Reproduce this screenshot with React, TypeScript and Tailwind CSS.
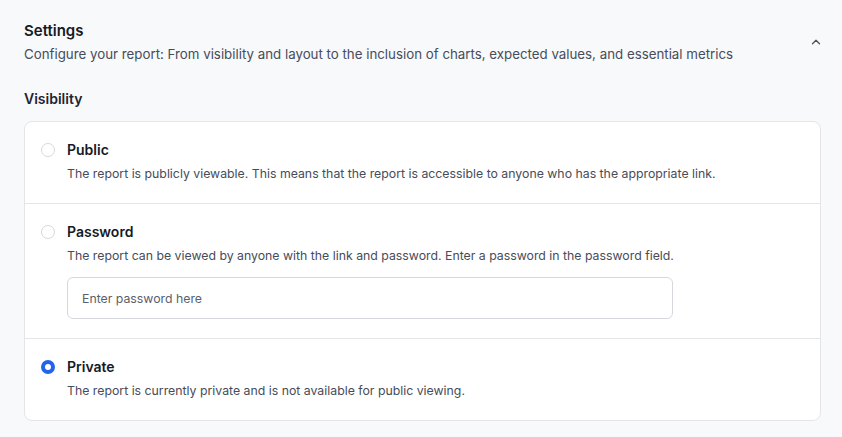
import React, { useState } from "react"

const options = [
  {
    id: "public",
    title: "Public",
    text: "The report is publicly viewable. This means that the report is accessible to anyone who has the appropriate link.",
  },
  {
    id: "password",
    title: "Password",
    text: "The report can be viewed by anyone with the link and password. Enter a password in the password field.",
  },
  {
    id: "private",
    title: "Private",
    text: "The report is currently private and is not available for public viewing.",
  },
]

export default function App() {
  const [visibility, setVisibility] = useState("private")

  return (
    <div className="min-h-[437px] bg-[#f8f9fb] pl-6 pr-[21px] pt-[21px] text-[#1f2433]" style={{ fontFamily: "Inter, 'Noto Sans', sans-serif" }}>
      {/* Header */}
      <div className="flex items-center justify-between">
        <div>
          <h2 className="text-[15px] leading-5 font-semibold text-[#161a25]">Settings</h2>
          <p className="mt-[3px] text-[13.3px] leading-5 text-[#474c5a]">
            Configure your report: From visibility and layout to the inclusion of charts, expected values, and essential metrics
          </p>
        </div>
        <button className="mr-[-2px] mt-[-2px] text-[#4b5160]">
          <svg width="14" height="14" viewBox="0 0 24 24" fill="none" stroke="currentColor" strokeWidth="2.2" strokeLinecap="round" strokeLinejoin="round">
            <path d="M6 15l6-6 6 6" />
          </svg>
        </button>
      </div>

      {/* Visibility */}
      <h3 className="mt-[25px] text-[14px] leading-5 font-semibold text-[#1f2433]">Visibility</h3>
      <div className="mt-[12px] rounded-lg border border-[#e4e5e9] bg-white">
        {options.map((opt, i) => (
          <div
            key={opt.id}
            className={`flex px-4 pt-[18px] pb-[19px] ${i > 0 ? "border-t border-[#e4e5e9]" : ""}`}
          >
            <button
              onClick={() => setVisibility(opt.id)}
              className={`mt-[3px] h-[14px] w-[14px] shrink-0 rounded-full ${
                visibility === opt.id ? "border-[4px] border-[#2563eb] bg-white" : "border border-[#d6d8dd] bg-white"
              }`}
            />
            <div className="ml-3 flex-1">
              <div className="text-[14px] leading-5 font-semibold text-[#161a25]">{opt.title}</div>
              <div className="mt-[4px] text-[12.3px] leading-5 text-[#474c5a]">{opt.text}</div>
              {opt.id === "password" && (
                <input
                  type="password"
                  placeholder="Enter password here"
                  className="mt-[11px] block h-[42px] w-[606px] rounded-md border border-[#d6d8dd] px-[14px] text-[12.3px] outline-none placeholder:text-[#5b606d]"
                />
              )}
            </div>
          </div>
        ))}
      </div>
    </div>
  )
}
